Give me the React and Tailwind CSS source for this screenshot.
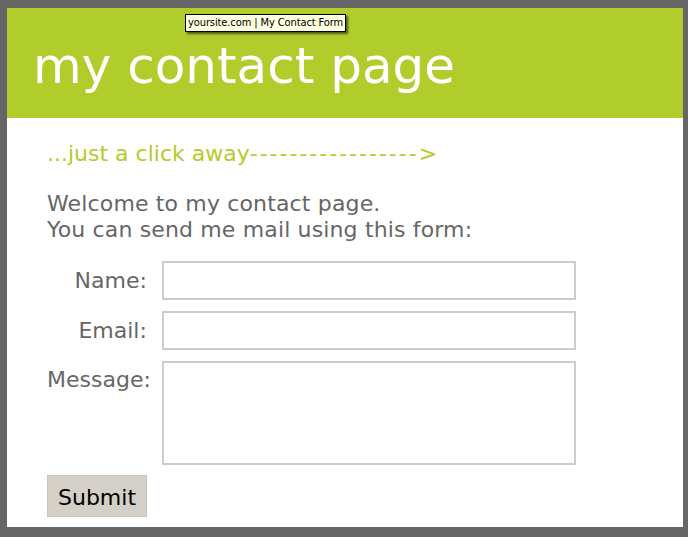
import React from "react";

export default function App() {
  const font = { fontFamily: '"DejaVu Sans", Verdana, sans-serif' };
  return (
    <div
      className="relative w-[688px] h-[537px] bg-[#666666] pt-[8px] pl-[7px] pr-[5px] pb-[10px] flex flex-col"
      style={font}
    >
      <div className="flex-1 bg-white flex flex-col">
        <header className="h-[110px] bg-[#b1cd2c] pl-[26px] pt-[33px]">
          <h1 className="text-[50px] leading-[50px] text-white font-normal">my contact page</h1>
        </header>
        <div className="pl-[40px] pt-[23px]">
          <p className="text-[22px] leading-[26px] text-[#b1cd2c]">
            ...just a click away<span className="tracking-[2px]">-----------------&gt;</span>
          </p>
          <p className="mt-[24px] text-[22px] leading-[26px] text-[#666666] tracking-[0.15px]">
            Welcome to my contact page.
            <br />
            You can send me mail using this form:
          </p>
          <form className="mt-[18px] grid grid-cols-[auto_414px] gap-x-[11px] gap-y-[11px] w-max">
            <label className="pt-[7px] pr-[4px] text-right text-[22px] leading-[26px] text-[#666666]">Name:</label>
            <input type="text" className="h-[39px] border-2 border-[#cccccc] bg-white outline-none" />
            <label className="pt-[7px] pr-[4px] text-right text-[22px] leading-[26px] text-[#666666]">Email:</label>
            <input type="text" className="h-[39px] border-2 border-[#cccccc] bg-white outline-none" />
            <label className="pt-[6px] text-right text-[22px] leading-[26px] text-[#666666]">Message:</label>
            <textarea className="h-[104px] border-2 border-[#cccccc] bg-white outline-none resize-none" />
            <div className="col-span-2 mt-[-1px]">
              <button
                type="button"
                className="w-[100px] h-[42px] pt-[3px] bg-[#d4d0c8] border border-[#c8c5be] text-black text-[22px] leading-[26px]"
                style={font}
              >
                Submit
              </button>
            </div>
          </form>
        </div>
      </div>
      <div
        className="absolute left-[185px] top-[14px] h-[18px] px-[2px] border border-black bg-[#ffffe1] text-black text-[11px] leading-[16px] tracking-[-0.1px] shadow-[2px_2px_2px_rgba(40,40,20,0.7)] whitespace-nowrap"
        style={{ fontFamily: '"DejaVu Sans Condensed", "Liberation Sans", sans-serif' }}
      >
        yoursite.com | My Contact Form
      </div>
    </div>
  );
}
